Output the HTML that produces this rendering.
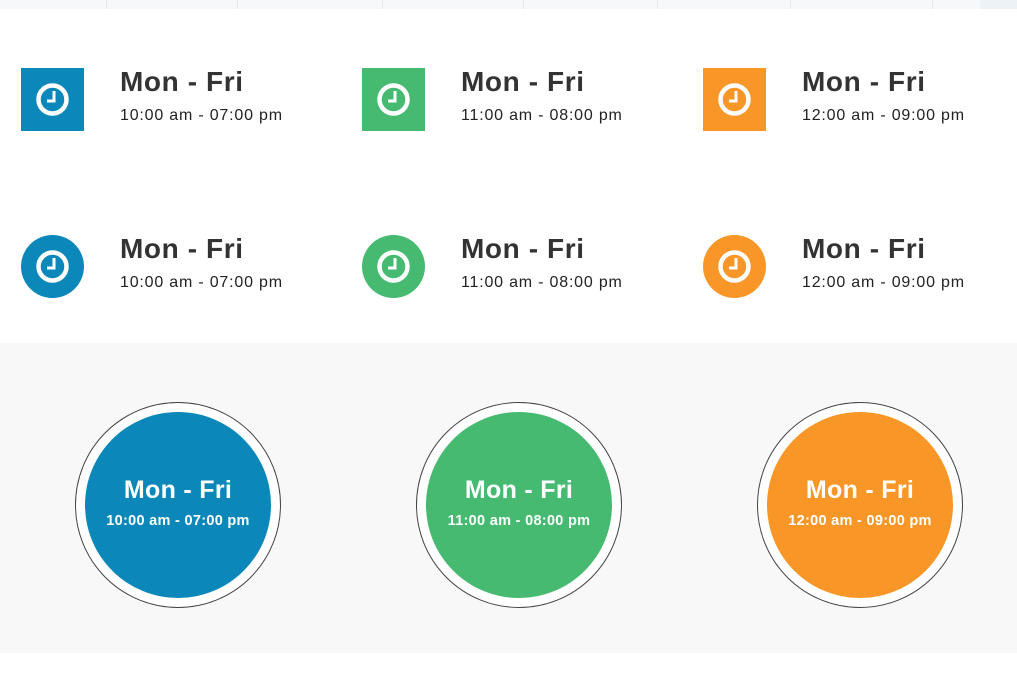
<!DOCTYPE html>
<html><head><meta charset="utf-8"><style>
*{margin:0;padding:0;box-sizing:border-box}
body{width:1017px;height:689px;background:#fff;position:relative;overflow:hidden;font-family:"Liberation Sans",sans-serif}
.top{position:absolute;left:0;top:0;width:1017px;height:9px;background:#f7f8f9}
.top i{position:absolute;top:0;width:1px;height:9px;background:#e6e8ea}
.ic{position:absolute;width:63px;height:63px}
.ic svg{position:absolute;left:0;top:0}
.h{position:absolute;font-weight:bold;font-size:28px;color:#333;letter-spacing:0.6px}
.t{position:absolute;font-size:16px;color:#222;letter-spacing:0.8px}
.gray{position:absolute;left:0;top:343px;width:1017px;height:310px;background:#f8f8f8}
.ring{position:absolute;width:206px;height:206px;border:1px solid #444;border-radius:50%;background:#fff}
.disc{position:absolute;left:9px;top:9px;width:186px;height:186px;border-radius:50%;color:#fff;text-align:center}
.disc b{display:block;font-size:25px;margin-top:64px;letter-spacing:0.3px}
.disc span{display:block;font-size:14.5px;margin-top:8px;font-weight:bold;letter-spacing:0.3px}
</style></head><body>
<div class="top"><i style="left:106px"></i><i style="left:237px"></i><i style="left:382px"></i><i style="left:523px"></i><i style="left:657px"></i><i style="left:790px"></i><i style="left:932px"></i><div style="position:absolute;left:980px;top:0;width:37px;height:9px;background:#edf2f7"></div></div>

<!-- row 1 -->
<div class="ic" style="left:21px;top:68px;background:#0b88b9"><svg width="63" height="63"><circle cx="31.5" cy="31.5" r="14" fill="none" stroke="#fff" stroke-width="4.5"/><path d="M33 23v10h-7" fill="none" stroke="#fff" stroke-width="3"/></svg></div>
<div class="h" style="left:120px;top:66px">Mon - Fri</div><div class="t" style="left:120px;top:107px">10:00 am - 07:00 pm</div>
<div class="ic" style="left:362px;top:68px;background:#45ba70"><svg width="63" height="63"><circle cx="31.5" cy="31.5" r="14" fill="none" stroke="#fff" stroke-width="4.5"/><path d="M33 23v10h-7" fill="none" stroke="#fff" stroke-width="3"/></svg></div>
<div class="h" style="left:461px;top:66px">Mon - Fri</div><div class="t" style="left:461px;top:107px">11:00 am - 08:00 pm</div>
<div class="ic" style="left:703px;top:68px;background:#f89728"><svg width="63" height="63"><circle cx="31.5" cy="31.5" r="14" fill="none" stroke="#fff" stroke-width="4.5"/><path d="M33 23v10h-7" fill="none" stroke="#fff" stroke-width="3"/></svg></div>
<div class="h" style="left:802px;top:66px">Mon - Fri</div><div class="t" style="left:802px;top:107px">12:00 am - 09:00 pm</div>

<!-- row 2 -->
<div class="ic" style="left:21px;top:235px;background:#0b88b9;border-radius:50%"><svg width="63" height="63"><circle cx="31.5" cy="31.5" r="14" fill="none" stroke="#fff" stroke-width="4.5"/><path d="M33 23v10h-7" fill="none" stroke="#fff" stroke-width="3"/></svg></div>
<div class="h" style="left:120px;top:233px">Mon - Fri</div><div class="t" style="left:120px;top:274px">10:00 am - 07:00 pm</div>
<div class="ic" style="left:362px;top:235px;background:#45ba70;border-radius:50%"><svg width="63" height="63"><circle cx="31.5" cy="31.5" r="14" fill="none" stroke="#fff" stroke-width="4.5"/><path d="M33 23v10h-7" fill="none" stroke="#fff" stroke-width="3"/></svg></div>
<div class="h" style="left:461px;top:233px">Mon - Fri</div><div class="t" style="left:461px;top:274px">11:00 am - 08:00 pm</div>
<div class="ic" style="left:703px;top:235px;background:#f89728;border-radius:50%"><svg width="63" height="63"><circle cx="31.5" cy="31.5" r="14" fill="none" stroke="#fff" stroke-width="4.5"/><path d="M33 23v10h-7" fill="none" stroke="#fff" stroke-width="3"/></svg></div>
<div class="h" style="left:802px;top:233px">Mon - Fri</div><div class="t" style="left:802px;top:274px">12:00 am - 09:00 pm</div>

<div class="gray">
<div class="ring" style="left:75px;top:59px"><div class="disc" style="background:#0b88b9"><b>Mon - Fri</b><span>10:00 am - 07:00 pm</span></div></div>
<div class="ring" style="left:416px;top:59px"><div class="disc" style="background:#45ba70"><b>Mon - Fri</b><span>11:00 am - 08:00 pm</span></div></div>
<div class="ring" style="left:757px;top:59px"><div class="disc" style="background:#f89728"><b>Mon - Fri</b><span>12:00 am - 09:00 pm</span></div></div>
</div>
</body></html>
